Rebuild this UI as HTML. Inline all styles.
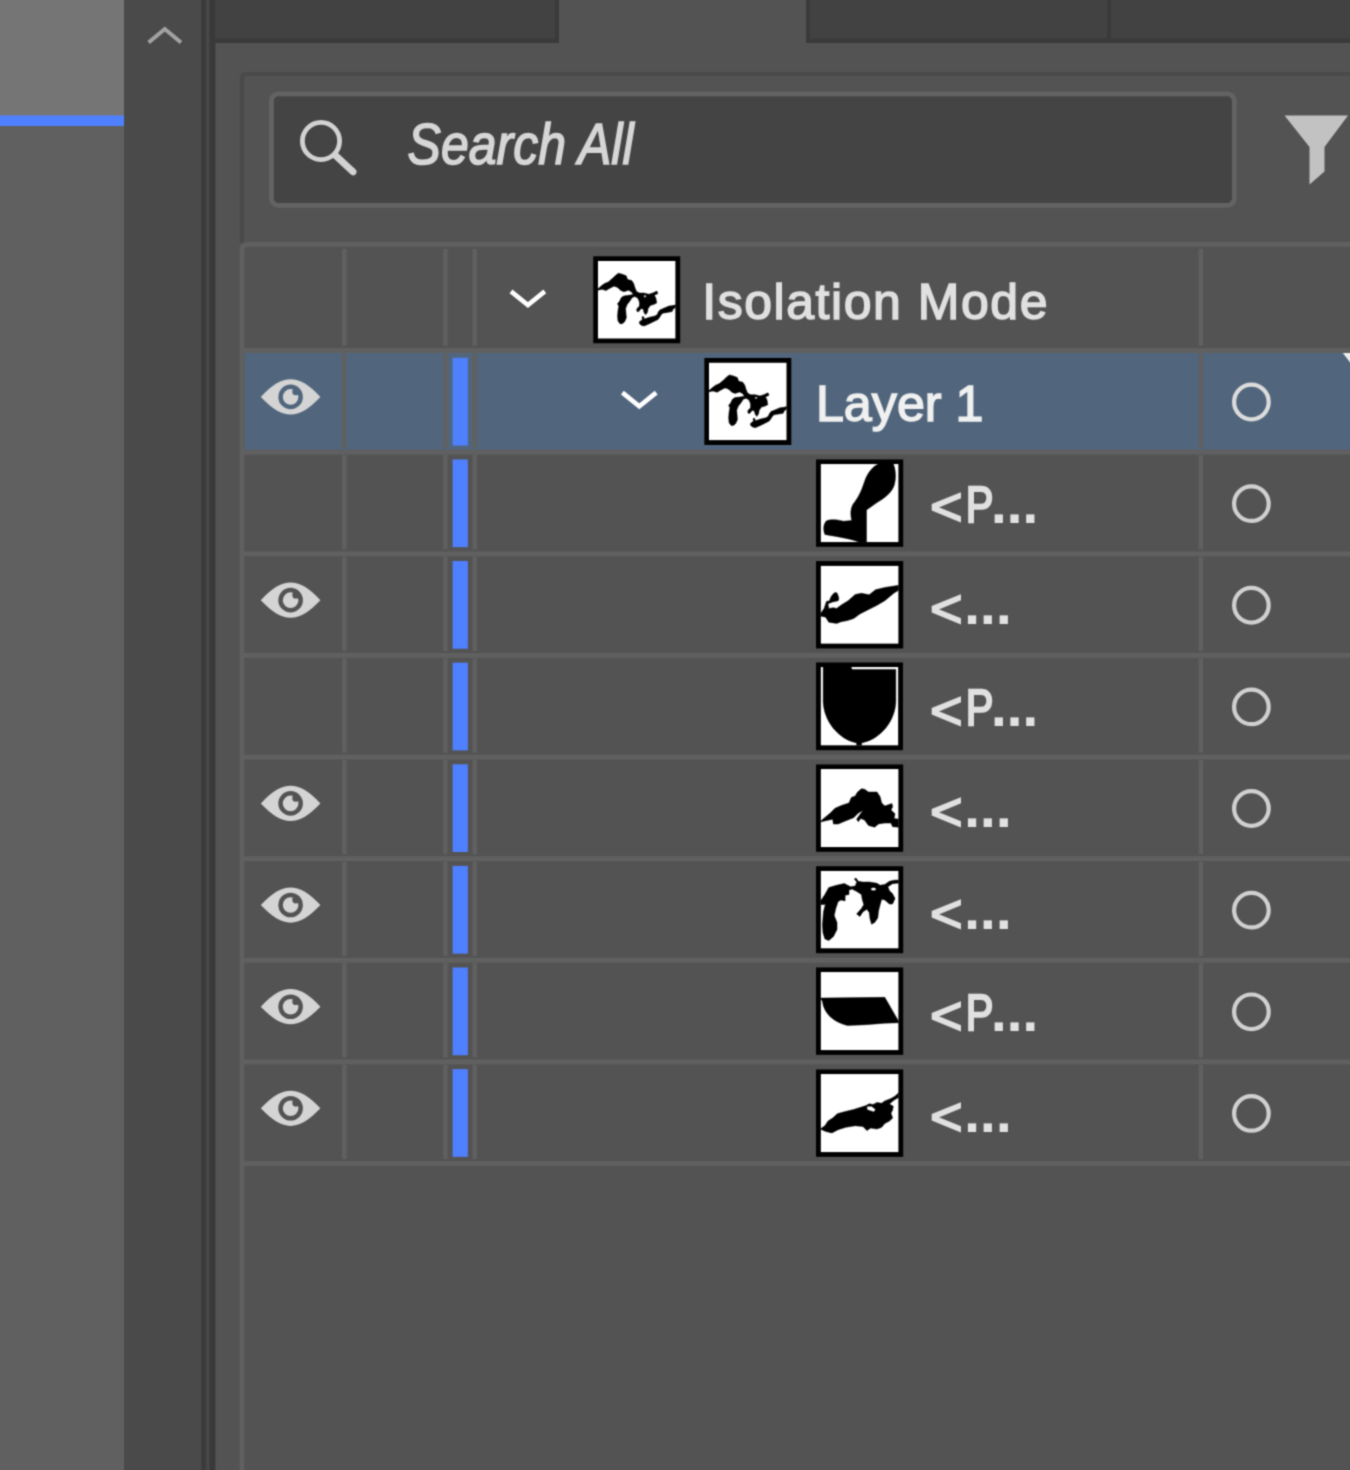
<!DOCTYPE html>
<html lang="en"><head><meta charset="utf-8"><title>Layers</title>
<style>
html,body{margin:0;padding:0;background:#535353;}
body{width:1350px;height:1470px;overflow:hidden;position:relative;font-family:"Liberation Sans",sans-serif;}
#ui{position:absolute;left:-8px;top:-8px;display:block;will-change:transform}
</style></head><body>
<svg id="ui" width="1366" height="1486" viewBox="-8 -8 1366 1486">
<defs><filter id="soft" filterUnits="userSpaceOnUse" x="-8" y="-8" width="1366" height="1486" color-interpolation-filters="sRGB"><feConvolveMatrix order="3" kernelMatrix="0.040 0.120 0.040 0.120 0.360 0.120 0.040 0.120 0.040" edgeMode="duplicate" preserveAlpha="true"/></filter></defs>
<g filter="url(#soft)">
<rect x="-8" y="-8" width="1366" height="1486" fill="#535353"/>
<rect x="-8" y="-8" width="132" height="124" fill="#757575"/>
<rect x="-8" y="115.4" width="132" height="10.6" fill="#4f80ff"/>
<rect x="-8" y="126" width="132" height="1354" fill="#606060"/>
<rect x="124" y="-8" width="78" height="1486" fill="#4a4a4a"/>
<polyline points="148.6,42.5 164.8,29 181,42.5" fill="none" stroke="#a2a2a2" stroke-width="4"/>
<rect x="201" y="-8" width="14.5" height="1486" fill="#474747"/>
<rect x="201.3" y="-8" width="4.6" height="1486" fill="#3b3b3b"/>
<rect x="209.6" y="-8" width="5.6" height="1486" fill="#393939"/>
<rect x="215" y="-8" width="1145" height="51" fill="#3a3a3a"/>
<rect x="215" y="-8" width="340" height="46.5" fill="#424242"/>
<rect x="559" y="-8" width="247" height="52" fill="#535353"/>
<rect x="810" y="-8" width="297" height="46.5" fill="#424242"/>
<rect x="1111" y="-8" width="249" height="46.5" fill="#424242"/>
<path d="M242 243 V78 Q242 74 246 74 H1362" fill="none" stroke="#4a4a4a" stroke-width="4.2"/>
<rect x="271.4" y="93.9" width="963" height="111.4" rx="7" ry="7" fill="#444444" stroke="#636363" stroke-width="4.8"/>
<circle cx="321" cy="141" r="18.6" fill="none" stroke="#d2d2d2" stroke-width="4.8"/>
<line x1="335.5" y1="155.5" x2="353" y2="171.8" stroke="#d2d2d2" stroke-width="7" stroke-linecap="round"/>
<path d="M1284.5 115.5 H1348 L1324.5 147 V171.5 L1309.5 184.5 V147 Z" fill="#c2c2c2"/>
<path d="M242 1482 V250 Q242 244.4 248 244.4 H1362" fill="none" stroke="#606060" stroke-width="4.6"/>
<rect x="244.3" y="352.8" width="1116" height="97.12" fill="#51667d"/>
<rect x="244" y="348.1" width="1116" height="4.9" fill="#606060"/>
<rect x="244" y="449.72" width="1116" height="4.9" fill="#606060"/>
<rect x="244" y="551.34" width="1116" height="4.9" fill="#606060"/>
<rect x="244" y="652.96" width="1116" height="4.9" fill="#606060"/>
<rect x="244" y="754.58" width="1116" height="4.9" fill="#606060"/>
<rect x="244" y="856.2" width="1116" height="4.9" fill="#606060"/>
<rect x="244" y="957.82" width="1116" height="4.9" fill="#606060"/>
<rect x="244" y="1059.44" width="1116" height="4.9" fill="#606060"/>
<rect x="244" y="1161.06" width="1116" height="4.9" fill="#606060"/>
<rect x="342.1" y="249" width="4.5" height="96.6" fill="#606060"/>
<rect x="443.2" y="249" width="4.5" height="96.6" fill="#606060"/>
<rect x="472.5" y="249" width="4.5" height="96.6" fill="#606060"/>
<rect x="1198.6" y="249" width="4.5" height="96.6" fill="#606060"/>
<rect x="342.1" y="353.5" width="4.5" height="94.22" fill="#606060"/>
<rect x="443.2" y="353.5" width="4.5" height="94.22" fill="#606060"/>
<rect x="472.5" y="353.5" width="4.5" height="94.22" fill="#606060"/>
<rect x="1198.6" y="353.5" width="4.5" height="94.22" fill="#606060"/>
<rect x="342.1" y="455.12" width="4.5" height="94.22" fill="#606060"/>
<rect x="443.2" y="455.12" width="4.5" height="94.22" fill="#606060"/>
<rect x="472.5" y="455.12" width="4.5" height="94.22" fill="#606060"/>
<rect x="1198.6" y="455.12" width="4.5" height="94.22" fill="#606060"/>
<rect x="342.1" y="556.74" width="4.5" height="94.22" fill="#606060"/>
<rect x="443.2" y="556.74" width="4.5" height="94.22" fill="#606060"/>
<rect x="472.5" y="556.74" width="4.5" height="94.22" fill="#606060"/>
<rect x="1198.6" y="556.74" width="4.5" height="94.22" fill="#606060"/>
<rect x="342.1" y="658.36" width="4.5" height="94.22" fill="#606060"/>
<rect x="443.2" y="658.36" width="4.5" height="94.22" fill="#606060"/>
<rect x="472.5" y="658.36" width="4.5" height="94.22" fill="#606060"/>
<rect x="1198.6" y="658.36" width="4.5" height="94.22" fill="#606060"/>
<rect x="342.1" y="759.98" width="4.5" height="94.22" fill="#606060"/>
<rect x="443.2" y="759.98" width="4.5" height="94.22" fill="#606060"/>
<rect x="472.5" y="759.98" width="4.5" height="94.22" fill="#606060"/>
<rect x="1198.6" y="759.98" width="4.5" height="94.22" fill="#606060"/>
<rect x="342.1" y="861.6" width="4.5" height="94.22" fill="#606060"/>
<rect x="443.2" y="861.6" width="4.5" height="94.22" fill="#606060"/>
<rect x="472.5" y="861.6" width="4.5" height="94.22" fill="#606060"/>
<rect x="1198.6" y="861.6" width="4.5" height="94.22" fill="#606060"/>
<rect x="342.1" y="963.22" width="4.5" height="94.22" fill="#606060"/>
<rect x="443.2" y="963.22" width="4.5" height="94.22" fill="#606060"/>
<rect x="472.5" y="963.22" width="4.5" height="94.22" fill="#606060"/>
<rect x="1198.6" y="963.22" width="4.5" height="94.22" fill="#606060"/>
<rect x="342.1" y="1064.84" width="4.5" height="94.22" fill="#606060"/>
<rect x="443.2" y="1064.84" width="4.5" height="94.22" fill="#606060"/>
<rect x="472.5" y="1064.84" width="4.5" height="94.22" fill="#606060"/>
<rect x="1198.6" y="1064.84" width="4.5" height="94.22" fill="#606060"/>
<rect x="452.6" y="357.8" width="15.2" height="87.72" fill="#4f80ff"/>
<rect x="452.6" y="459.42" width="15.2" height="87.72" fill="#4f80ff"/>
<rect x="452.6" y="561.04" width="15.2" height="87.72" fill="#4f80ff"/>
<rect x="452.6" y="662.66" width="15.2" height="87.72" fill="#4f80ff"/>
<rect x="452.6" y="764.28" width="15.2" height="87.72" fill="#4f80ff"/>
<rect x="452.6" y="865.9" width="15.2" height="87.72" fill="#4f80ff"/>
<rect x="452.6" y="967.52" width="15.2" height="87.72" fill="#4f80ff"/>
<rect x="452.6" y="1069.14" width="15.2" height="87.72" fill="#4f80ff"/>
<polyline points="511,291.4 527.9,305 544.8,291.4" fill="none" stroke="#ffffff" stroke-width="4.6"/>
<polyline points="622.4,392.6 639.3,406.2 656.2,392.6" fill="none" stroke="#ffffff" stroke-width="4.6"/>
<path d="M1342.8 353 H1360 V375 Z" fill="#eeeeee"/>
<g transform="translate(290.6,396.9)"><path d="M-29.8 0 C-18 -12.5 -9 -17.6 0 -17.6 C9 -17.6 18 -12.5 29.8 0 C18 12.5 9 17.6 0 17.6 C-9 17.6 -18 12.5 -29.8 0 Z" fill="#d4d4d4"/><circle r="12.3" fill="#51667d"/><circle r="7.8" fill="#d4d4d4"/><circle cx="5.3" cy="-5.2" r="3.6" fill="#51667d"/></g>
<g transform="translate(290.6,600.16)"><path d="M-29.8 0 C-18 -12.5 -9 -17.6 0 -17.6 C9 -17.6 18 -12.5 29.8 0 C18 12.5 9 17.6 0 17.6 C-9 17.6 -18 12.5 -29.8 0 Z" fill="#d4d4d4"/><circle r="12.3" fill="#535353"/><circle r="7.8" fill="#d4d4d4"/><circle cx="5.3" cy="-5.2" r="3.6" fill="#535353"/></g>
<g transform="translate(290.6,803.42)"><path d="M-29.8 0 C-18 -12.5 -9 -17.6 0 -17.6 C9 -17.6 18 -12.5 29.8 0 C18 12.5 9 17.6 0 17.6 C-9 17.6 -18 12.5 -29.8 0 Z" fill="#d4d4d4"/><circle r="12.3" fill="#535353"/><circle r="7.8" fill="#d4d4d4"/><circle cx="5.3" cy="-5.2" r="3.6" fill="#535353"/></g>
<g transform="translate(290.6,905.05)"><path d="M-29.8 0 C-18 -12.5 -9 -17.6 0 -17.6 C9 -17.6 18 -12.5 29.8 0 C18 12.5 9 17.6 0 17.6 C-9 17.6 -18 12.5 -29.8 0 Z" fill="#d4d4d4"/><circle r="12.3" fill="#535353"/><circle r="7.8" fill="#d4d4d4"/><circle cx="5.3" cy="-5.2" r="3.6" fill="#535353"/></g>
<g transform="translate(290.6,1006.68)"><path d="M-29.8 0 C-18 -12.5 -9 -17.6 0 -17.6 C9 -17.6 18 -12.5 29.8 0 C18 12.5 9 17.6 0 17.6 C-9 17.6 -18 12.5 -29.8 0 Z" fill="#d4d4d4"/><circle r="12.3" fill="#535353"/><circle r="7.8" fill="#d4d4d4"/><circle cx="5.3" cy="-5.2" r="3.6" fill="#535353"/></g>
<g transform="translate(290.6,1108.31)"><path d="M-29.8 0 C-18 -12.5 -9 -17.6 0 -17.6 C9 -17.6 18 -12.5 29.8 0 C18 12.5 9 17.6 0 17.6 C-9 17.6 -18 12.5 -29.8 0 Z" fill="#d4d4d4"/><circle r="12.3" fill="#535353"/><circle r="7.8" fill="#d4d4d4"/><circle cx="5.3" cy="-5.2" r="3.6" fill="#535353"/></g>
<circle cx="1251.4" cy="402" r="17.3" fill="none" stroke="#dcdcdc" stroke-width="4.2"/>
<circle cx="1251.4" cy="503.63" r="17.3" fill="none" stroke="#d0d0d0" stroke-width="4.2"/>
<circle cx="1251.4" cy="605.26" r="17.3" fill="none" stroke="#d0d0d0" stroke-width="4.2"/>
<circle cx="1251.4" cy="706.89" r="17.3" fill="none" stroke="#d0d0d0" stroke-width="4.2"/>
<circle cx="1251.4" cy="808.52" r="17.3" fill="none" stroke="#d0d0d0" stroke-width="4.2"/>
<circle cx="1251.4" cy="910.15" r="17.3" fill="none" stroke="#d0d0d0" stroke-width="4.2"/>
<circle cx="1251.4" cy="1011.78" r="17.3" fill="none" stroke="#d0d0d0" stroke-width="4.2"/>
<circle cx="1251.4" cy="1113.41" r="17.3" fill="none" stroke="#d0d0d0" stroke-width="4.2"/>
<rect x="593.23" y="256.29" width="86.98" height="86.98" fill="#000"/>
<svg x="597.83" y="260.89" width="77.78" height="77.78" viewBox="165 140 1000 1000" preserveAspectRatio="none"><rect x="165" y="140" width="1000" height="1000" fill="#fff"/><path d="M165 500 L215 458 L250 432 L300 410 L350 368 L400 320 L430 298 L480 312 L530 332 L548 380 L600 392 L626 430 L640 480 L662 532 L700 553 L760 553 L820 568 L870 553 L925 528 L938 560 L892 582 L912 620 L922 682 L880 702 L840 712 L812 752 L802 802 L780 832 L758 802 L750 762 L722 752 L692 792 L668 792 L664 760 L700 720 L700 670 L680 620 L642 597 L606 612 L580 652 L542 702 L522 752 L527 812 L532 872 L510 922 L480 948 L450 948 L424 912 L418 850 L424 780 L434 722 L418 690 L444 660 L468 610 L500 590 L560 583 L620 572 L600 540 L560 518 L500 536 L460 520 L430 492 L400 472 L370 466 L320 492 L270 522 L220 506 L165 516 Z M756 582 L786 582 L786 606 L756 606 Z M700 922 L738 892 L732 858 L756 858 L762 888 L830 864 L900 848 L930 828 L940 800 L962 770 L1020 745 L1080 720 L1130 714 L1170 704 L1170 732 L1132 762 L1120 792 L1060 802 L1000 812 L980 832 L962 862 L940 892 L880 922 L820 952 L760 978 L720 966 L698 942 Z" fill="#000" fill-rule="evenodd" stroke="#000" stroke-width="6" stroke-linejoin="round"/></svg>
<rect x="704.33" y="357.99" width="86.98" height="86.98" fill="#000"/>
<svg x="708.93" y="362.59" width="77.78" height="77.78" viewBox="165 140 1000 1000" preserveAspectRatio="none"><rect x="165" y="140" width="1000" height="1000" fill="#fff"/><path d="M165 500 L215 458 L250 432 L300 410 L350 368 L400 320 L430 298 L480 312 L530 332 L548 380 L600 392 L626 430 L640 480 L662 532 L700 553 L760 553 L820 568 L870 553 L925 528 L938 560 L892 582 L912 620 L922 682 L880 702 L840 712 L812 752 L802 802 L780 832 L758 802 L750 762 L722 752 L692 792 L668 792 L664 760 L700 720 L700 670 L680 620 L642 597 L606 612 L580 652 L542 702 L522 752 L527 812 L532 872 L510 922 L480 948 L450 948 L424 912 L418 850 L424 780 L434 722 L418 690 L444 660 L468 610 L500 590 L560 583 L620 572 L600 540 L560 518 L500 536 L460 520 L430 492 L400 472 L370 466 L320 492 L270 522 L220 506 L165 516 Z M756 582 L786 582 L786 606 L756 606 Z M700 922 L738 892 L732 858 L756 858 L762 888 L830 864 L900 848 L930 828 L940 800 L962 770 L1020 745 L1080 720 L1130 714 L1170 704 L1170 732 L1132 762 L1120 792 L1060 802 L1000 812 L980 832 L962 862 L940 892 L880 922 L820 952 L760 978 L720 966 L698 942 Z" fill="#000" fill-rule="evenodd" stroke="#000" stroke-width="6" stroke-linejoin="round"/></svg>
<rect x="816.01" y="459.46" width="87.21" height="87.37" fill="#000"/>
<svg x="820.61" y="464.06" width="78.01" height="78.17" viewBox="175 155 1003 1005" preserveAspectRatio="none"><rect x="175" y="155" width="1003" height="1005" fill="#fff"/><path d="M930 150 L1108 150 C1140 220 1150 330 1120 430 C1090 520 1000 590 900 650 L765 745 L765 1170 L700 1170 C600 1120 400 1092 230 1060 C205 1000 210 930 250 885 C300 860 400 870 470 890 L575 880 C556 800 558 720 600 660 C660 590 700 500 740 380 C780 260 850 180 930 150 Z" fill="#000" fill-rule="evenodd" stroke="#000" stroke-width="6" stroke-linejoin="round"/></svg>
<rect x="816.01" y="561.07" width="87.21" height="87.37" fill="#000"/>
<svg x="820.61" y="565.67" width="78.01" height="78.17" viewBox="175 150 1003 1005" preserveAspectRatio="none"><rect x="175" y="150" width="1003" height="1005" fill="#fff"/><path d="M170 772 L220 700 L250 610 L290 600 C300 560 320 520 360 494 L386 500 C402 540 420 570 400 602 L330 616 L270 640 L280 700 L340 690 L380 700 L450 650 L530 600 L620 520 L700 505 L800 525 L880 460 L1000 430 L1100 415 L1185 402 L1185 462 L1120 500 L1000 600 L900 660 L780 720 L680 770 L600 830 L520 856 L440 870 L380 892 L280 876 L240 812 L170 796 Z" fill="#000" fill-rule="evenodd" stroke="#000" stroke-width="6" stroke-linejoin="round"/></svg>
<rect x="816.01" y="662.46" width="86.98" height="87.76" fill="#000"/>
<svg x="820.61" y="667.06" width="77.78" height="78.56" viewBox="175 155 1000 1010" preserveAspectRatio="none"><rect x="175" y="155" width="1000" height="1010" fill="#fff"/><path d="M208 150 L562 150 L582 186 L1142 186 L1142 600 C1132 850 950 1080 702 1130 L702 1175 L638 1175 L638 1130 C400 1080 218 850 208 600 Z" fill="#000" fill-rule="evenodd" stroke="#000" stroke-width="6" stroke-linejoin="round"/></svg>
<rect x="816.01" y="764.46" width="87.21" height="87.37" fill="#000"/>
<svg x="820.61" y="769.06" width="78.01" height="78.17" viewBox="175 155 1003 1005" preserveAspectRatio="none"><rect x="175" y="155" width="1003" height="1005" fill="#fff"/><path d="M170 830 L215 790 L300 720 L360 660 L450 620 L540 590 L570 520 L620 500 L650 450 L700 408 L740 414 L790 450 L900 450 L940 510 L960 590 L1000 630 L1092 598 L1102 640 L1080 680 L1132 730 L1120 790 L1185 800 L1185 902 L1100 896 L1080 850 L1000 850 L920 860 L870 902 L790 880 L740 810 L690 790 L660 832 L638 800 L680 740 L722 688 L660 720 L600 780 L500 820 L400 862 L340 862 L330 800 L240 820 L170 836 Z" fill="#000" fill-rule="evenodd" stroke="#000" stroke-width="6" stroke-linejoin="round"/></svg>
<rect x="816.01" y="866.23" width="87.21" height="86.98" fill="#000"/>
<svg x="820.61" y="870.83" width="78.01" height="77.78" viewBox="175 165 1003 1000" preserveAspectRatio="none"><rect x="175" y="165" width="1003" height="1000" fill="#fff"/><path d="M170 560 L230 470 L280 380 L380 350 L480 328 L560 370 L620 360 L640 310 L608 270 L630 258 L660 300 L720 310 L800 308 L900 325 L940 350 L1000 340 L1060 300 L1120 285 L1185 283 L1185 322 L1100 330 L1040 370 L1060 420 L1100 460 L1132 520 L1100 592 L1060 592 L1000 540 L960 530 L940 600 L920 680 L910 770 L870 830 L830 852 L810 780 L800 700 L770 660 L720 690 L680 752 L638 720 L700 650 L730 600 L710 530 L700 470 L640 430 L580 400 L540 410 L540 470 L490 480 L490 552 L440 540 L400 560 L370 650 L350 740 L386 830 L386 920 L340 1010 L280 1062 L230 1040 L205 960 L198 860 L212 690 L236 596 L170 602 Z M820 400 A35 21 0 1 0 890 400 A35 21 0 1 0 820 400 Z" fill="#000" fill-rule="evenodd" stroke="#000" stroke-width="6" stroke-linejoin="round"/></svg>
<rect x="816.01" y="967.46" width="87.21" height="87.37" fill="#000"/>
<svg x="820.61" y="972.06" width="78.01" height="78.17" viewBox="175 155 1003 1005" preserveAspectRatio="none"><rect x="175" y="155" width="1003" height="1005" fill="#fff"/><path d="M170 490 L1000 480 L1185 800 L1185 806 L1000 812 L750 832 L520 842 C350 800 220 700 198 530 Z" fill="#000" fill-rule="evenodd" stroke="#000" stroke-width="6" stroke-linejoin="round"/></svg>
<rect x="816.01" y="1069.46" width="87.21" height="87.37" fill="#000"/>
<svg x="820.61" y="1074.06" width="78.01" height="78.17" viewBox="175 155 1003 1005" preserveAspectRatio="none"><rect x="175" y="155" width="1003" height="1005" fill="#fff"/><path d="M170 862 L230 820 L270 760 L330 720 L390 664 L480 640 L600 610 L700 580 L760 560 L800 538 L850 545 L900 520 L960 530 L1000 500 L1080 470 L1130 440 L1185 390 L1185 452 L1120 490 L1060 540 L1110 570 L1100 620 L1080 660 L1102 720 L1060 760 L1000 790 L960 840 L900 862 L820 850 L770 882 L720 830 L620 820 L500 840 L400 870 L320 912 L240 892 Z M772 570 L830 568 L882 610 L860 642 L800 622 L770 610 Z" fill="#000" fill-rule="evenodd" stroke="#000" stroke-width="6" stroke-linejoin="round"/></svg>
<text transform="translate(407.6,164.2) scale(0.877,1)" font-family="'Liberation Sans', sans-serif" font-size="57" font-weight="normal" font-style="italic" fill="#d6d6d6" stroke="#d6d6d6" stroke-width="1.6">Search All</text>
<text transform="translate(702.3,318.9) scale(1.0,1)" font-family="'Liberation Sans', sans-serif" font-size="50" font-weight="normal" letter-spacing="1.54" fill="#e0e0e0" stroke="#e0e0e0" stroke-width="1.5">Isolation Mode</text>
<text transform="translate(815.9,420.55) scale(1.005,1)" font-family="'Liberation Sans', sans-serif" font-size="50" font-weight="normal" fill="#f0f0f0" stroke="#f0f0f0" stroke-width="1.5">Layer 1</text>
<text transform="translate(929.9,525.3) scale(1.0,0.95)" font-family="'Liberation Sans', sans-serif" font-size="56" font-weight="normal" fill="#e0e0e0" stroke="#e0e0e0" stroke-width="2.0">&lt;</text>
<text transform="translate(965.7,522.1) scale(0.83,1)" font-family="'Liberation Sans', sans-serif" font-size="50" font-weight="normal" fill="#e0e0e0" stroke="#e0e0e0" stroke-width="2.3">P</text>
<text transform="translate(990.7,522.5) scale(1.0,1)" font-family="'Liberation Sans', sans-serif" font-size="58" font-weight="bold" letter-spacing="-0.3" fill="#e2e2e2">...</text>
<text transform="translate(929.9,626.95) scale(1.0,0.95)" font-family="'Liberation Sans', sans-serif" font-size="56" font-weight="normal" fill="#e0e0e0" stroke="#e0e0e0" stroke-width="2.0">&lt;</text>
<text transform="translate(964,624.15) scale(1.0,1)" font-family="'Liberation Sans', sans-serif" font-size="58" font-weight="bold" letter-spacing="-0.3" fill="#e2e2e2">...</text>
<text transform="translate(929.9,728.6) scale(1.0,0.95)" font-family="'Liberation Sans', sans-serif" font-size="56" font-weight="normal" fill="#e0e0e0" stroke="#e0e0e0" stroke-width="2.0">&lt;</text>
<text transform="translate(965.7,725.4) scale(0.83,1)" font-family="'Liberation Sans', sans-serif" font-size="50" font-weight="normal" fill="#e0e0e0" stroke="#e0e0e0" stroke-width="2.3">P</text>
<text transform="translate(990.7,725.8) scale(1.0,1)" font-family="'Liberation Sans', sans-serif" font-size="58" font-weight="bold" letter-spacing="-0.3" fill="#e2e2e2">...</text>
<text transform="translate(929.9,830.25) scale(1.0,0.95)" font-family="'Liberation Sans', sans-serif" font-size="56" font-weight="normal" fill="#e0e0e0" stroke="#e0e0e0" stroke-width="2.0">&lt;</text>
<text transform="translate(964,827.45) scale(1.0,1)" font-family="'Liberation Sans', sans-serif" font-size="58" font-weight="bold" letter-spacing="-0.3" fill="#e2e2e2">...</text>
<text transform="translate(929.9,931.9) scale(1.0,0.95)" font-family="'Liberation Sans', sans-serif" font-size="56" font-weight="normal" fill="#e0e0e0" stroke="#e0e0e0" stroke-width="2.0">&lt;</text>
<text transform="translate(964,929.1) scale(1.0,1)" font-family="'Liberation Sans', sans-serif" font-size="58" font-weight="bold" letter-spacing="-0.3" fill="#e2e2e2">...</text>
<text transform="translate(929.9,1033.55) scale(1.0,0.95)" font-family="'Liberation Sans', sans-serif" font-size="56" font-weight="normal" fill="#e0e0e0" stroke="#e0e0e0" stroke-width="2.0">&lt;</text>
<text transform="translate(965.7,1030.35) scale(0.83,1)" font-family="'Liberation Sans', sans-serif" font-size="50" font-weight="normal" fill="#e0e0e0" stroke="#e0e0e0" stroke-width="2.3">P</text>
<text transform="translate(990.7,1030.75) scale(1.0,1)" font-family="'Liberation Sans', sans-serif" font-size="58" font-weight="bold" letter-spacing="-0.3" fill="#e2e2e2">...</text>
<text transform="translate(929.9,1135.2) scale(1.0,0.95)" font-family="'Liberation Sans', sans-serif" font-size="56" font-weight="normal" fill="#e0e0e0" stroke="#e0e0e0" stroke-width="2.0">&lt;</text>
<text transform="translate(964,1132.4) scale(1.0,1)" font-family="'Liberation Sans', sans-serif" font-size="58" font-weight="bold" letter-spacing="-0.3" fill="#e2e2e2">...</text>
</g>
</svg>
</body></html>
